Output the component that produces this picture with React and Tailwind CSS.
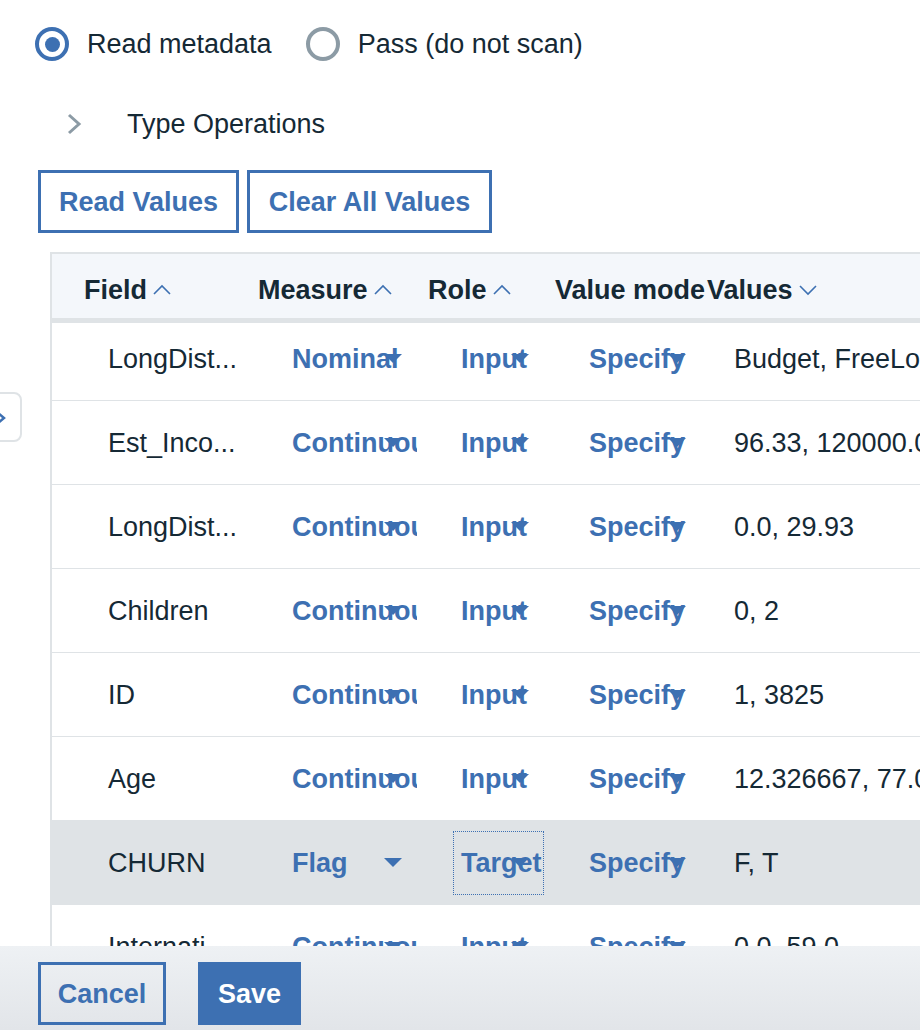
import React from 'react';

const rows = [
  { field: 'LongDist...', measure: 'Nominal', role: 'Input', mode: 'Specify', values: 'Budget, FreeLocal, Intnl_discount, Standard' },
  { field: 'Est_Inco...', measure: 'Continuous', role: 'Input', mode: 'Specify', values: '96.33, 120000.0' },
  { field: 'LongDist...', measure: 'Continuous', role: 'Input', mode: 'Specify', values: '0.0, 29.93' },
  { field: 'Children', measure: 'Continuous', role: 'Input', mode: 'Specify', values: '0, 2' },
  { field: 'ID', measure: 'Continuous', role: 'Input', mode: 'Specify', values: '1, 3825' },
  { field: 'Age', measure: 'Continuous', role: 'Input', mode: 'Specify', values: '12.326667, 77.0' },
  { field: 'CHURN', measure: 'Flag', role: 'Target', mode: 'Specify', values: 'F, T', selected: true },
  { field: 'Internati...', measure: 'Continuous', role: 'Input', mode: 'Specify', values: '0.0, 59.0' },
];

function Caret({ down }) {
  return (
    <svg width="20" height="12" viewBox="0 0 20 12" className="shrink-0">
      <polyline
        points={down ? '2,2 10,10 18,2' : '2,10 10,2 18,10'}
        fill="none"
        stroke="#3d70b2"
        strokeWidth="1.6"
      />
    </svg>
  );
}

function Arrow() {
  return (
    <svg width="18" height="9" viewBox="0 0 18 9" className="absolute right-[15px] top-[27px]">
      <polygon points="0,0 18,0 9,9" fill="#3d70b2" />
    </svg>
  );
}

// inline select: text clipped at box edge, arrow drawn over it
function Select({ text, width, focused }) {
  return (
    <div
      className={`relative h-[64px] ${width} overflow-hidden pl-[8px] flex items-center whitespace-nowrap font-bold text-[#3d70b2] ${
        focused ? 'outline-1 outline-dotted outline-[#3d70b2] -outline-offset-1' : ''
      }`}
    >
      {text}
      <Arrow />
    </div>
  );
}

function Radio({ checked, label }) {
  return (
    <div className="flex items-center gap-[18px]">
      <div
        className={`w-[34px] h-[34px] rounded-full border-[4px] flex items-center justify-center ${
          checked ? 'border-[#3d70b2]' : 'border-[#8c9ba5]'
        }`}
      >
        {checked && <div className="w-[15px] h-[15px] rounded-full bg-[#3d70b2]" />}
      </div>
      <span>{label}</span>
    </div>
  );
}

export default function App() {
  return (
    <div className="relative w-[920px] h-[1030px] overflow-hidden flex flex-col bg-white text-[#152935] text-[27px] leading-[32px] font-['Liberation_Sans',Arial,sans-serif]">
      {/* Radios */}
      <div className="flex items-center gap-[34px] pl-[35px] pt-[27px] h-[61px]">
        <Radio checked label="Read metadata" />
        <Radio label="Pass (do not scan)" />
      </div>

      {/* Type operations toggle */}
      <div className="flex items-center h-[40px] mt-[43px] pl-[64px]">
        <svg width="20" height="28" viewBox="0 0 20 28">
          <polyline points="5,5 15,14 5,23" fill="none" stroke="#8c9ba5" strokeWidth="3" />
        </svg>
        <span className="ml-[43px]">Type Operations</span>
      </div>

      {/* Value buttons */}
      <div className="flex gap-[8px] pl-[38px] mt-[26px]">
        <button className="w-[201px] h-[63px] border-[3px] border-[#3d70b2] font-bold text-[#3d70b2]">Read Values</button>
        <button className="w-[245px] h-[63px] border-[3px] border-[#3d70b2] font-bold text-[#3d70b2]">Clear All Values</button>
      </div>

      {/* Table */}
      <div className="flex-1 min-h-0 mt-[19px] ml-[50px] border-l-2 border-t-2 border-[#dfe3e6] overflow-hidden flex flex-col">
        <div className="relative z-10 flex items-center h-[69px] shrink-0 bg-[#f4f7fb] border-b-[5px] border-[#dfe3e6] font-bold whitespace-nowrap pt-[8px]">
          <div className="w-[174px] shrink-0 pl-[32px] flex items-center gap-[5px]">Field<Caret /></div>
          <div className="w-[170px] shrink-0 pl-[32px] flex items-center gap-[5px]">Measure<Caret /></div>
          <div className="w-[127px] shrink-0 pl-[32px] flex items-center gap-[5px]">Role<Caret /></div>
          <div className="w-[146px] shrink-0 pl-[32px]">Value mode</div>
          <div className="shrink-0 pl-[38px] flex items-center gap-[5px]">Values<Caret down /></div>
        </div>

        <div className="-mt-[6px]">
          {rows.map((r, i) => (
            <div
              key={i}
              className={`flex items-center h-[84px] border-b border-[#dfe3e6] whitespace-nowrap ${
                r.selected ? 'bg-[#dfe3e6]' : 'bg-white'
              }`}
            >
              <div className="w-[174px] shrink-0 pl-[56px]">{r.field}</div>
              <div className="w-[170px] shrink-0 pl-[58px]">
                <Select text={r.measure} width="w-[133px]" />
              </div>
              <div className="w-[127px] shrink-0 pl-[57px]">
                <Select text={r.role} width="w-[91px]" focused={r.selected} />
              </div>
              <div className="w-[146px] shrink-0 pl-[58px]">
                <Select text={r.mode} width="w-[120px]" />
              </div>
              <div className="shrink-0 pl-[65px]">{r.values}</div>
            </div>
          ))}
        </div>
      </div>

      {/* Footer */}
      <div className="relative z-20 h-[84px] shrink-0 flex items-start gap-[32px] pt-[16px] pl-[38px] bg-gradient-to-b from-[#eef1f4] to-[#e2e5e9]">
        <button className="w-[128px] h-[63px] border-[3px] border-[#3d70b2] font-bold text-[#3d70b2]">Cancel</button>
        <button className="w-[103px] h-[63px] bg-[#3d70b2] font-bold text-white">Save</button>
      </div>

      {/* collapsed side panel tab */}
      <div className="absolute left-[-30px] top-[392px] w-[52px] h-[50px] border-2 border-[#dfe3e6] rounded-[8px] bg-white">
        <svg width="14" height="16" viewBox="0 0 14 16" className="absolute left-[23px] top-[16px]">
          <polyline points="2,2 9,8 2,14" fill="none" stroke="#3d70b2" strokeWidth="2.5" />
        </svg>
      </div>
    </div>
  );
}
